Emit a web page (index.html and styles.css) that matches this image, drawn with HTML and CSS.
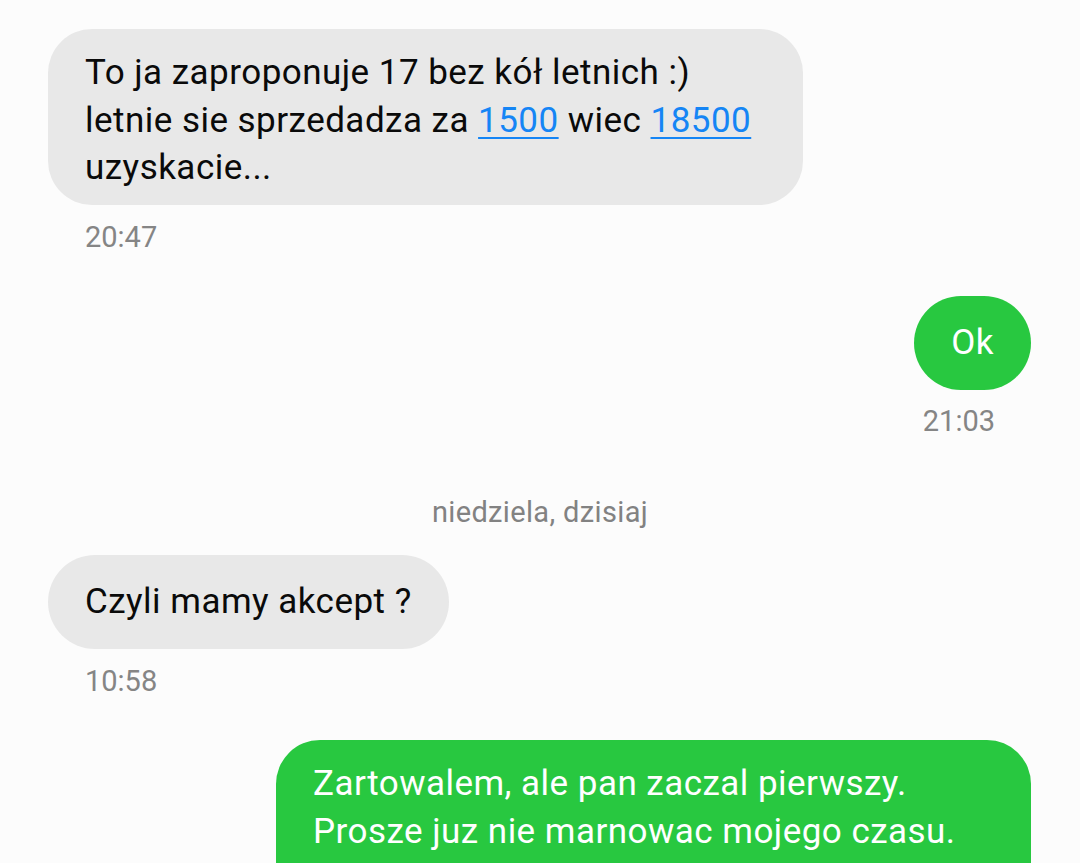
FILE: index.html
```html
<!DOCTYPE html>
<html lang="pl">
<head>
<meta charset="utf-8">
<title>Wiadomości</title>
<link rel="stylesheet" href="styles.css">
</head>
<body>
<main class="chat">
  <div class="msg in">
    <div class="bubble">To ja zaproponuje 17 bez kół letnich :) letnie sie sprzedadza za <a class="num" href="#">1500</a> wiec <a class="num" href="#">18500</a> uzyskacie...</div>
    <div class="time">20:47</div>
  </div>
  <div class="msg out">
    <div class="bubble single">Ok</div>
    <div class="time">21:03</div>
  </div>
  <div class="date">niedziela, dzisiaj</div>
  <div class="msg in">
    <div class="bubble single">Czyli mamy akcept ?</div>
    <div class="time">10:58</div>
  </div>
  <div class="msg out">
    <div class="bubble">Zartowalem, ale pan zaczal pierwszy. Prosze juz nie marnowac mojego czasu. Samochod jest juz sprzedany. Dziekuje i pozdrawiam.</div>
  </div>
</main>
</body>
</html>
```
FILE: styles.css
```css
html, body {
  margin: 0;
  padding: 0;
  background: #fcfcfc;
  height: 100%;
  overflow: hidden;
}
body {
  font-family: Roboto, "Noto Sans", "Liberation Sans", sans-serif;
}
.chat {
  display: flex;
  flex-direction: column;
  padding: 29px 49px 0 48px;
}
.msg {
  display: flex;
  flex-direction: column;
  margin-bottom: 41px;
}
.msg.in { align-items: flex-start; }
.msg.out { align-items: flex-end; }
.bubble {
  font-size: 35px;
  letter-spacing: 0.47px;
  line-height: 47.5px;
  padding: 20.3px 37px 13.2px 37px;
  border-radius: 44px;
  max-width: 755px;
  box-sizing: border-box;
  color: #0a0a0a;
}
.bubble.single {
  padding: 23.5px 37px 23px 37px;
  border-radius: 47px;
}
.msg.in .bubble {
  background: #e8e8e8;
}
.msg.out .bubble {
  background: #28c840;
  color: #ffffff;
}
.num {
  color: #1585f5;
  text-decoration: underline;
  text-decoration-thickness: 2px;
  text-underline-offset: 5px;
}
.time {
  font-size: 29px;
  line-height: 36px;
  color: #858585;
  margin-top: 14px;
  padding: 0 37px;
}
.msg.out .time { margin-top: 13px; padding-right: 36px; }
.date {
  text-align: center;
  font-size: 29px;
  letter-spacing: 0.35px;
  line-height: 34px;
  color: #828282;
  margin: 15px 0 26px;
  padding-left: 1px;
}
```
